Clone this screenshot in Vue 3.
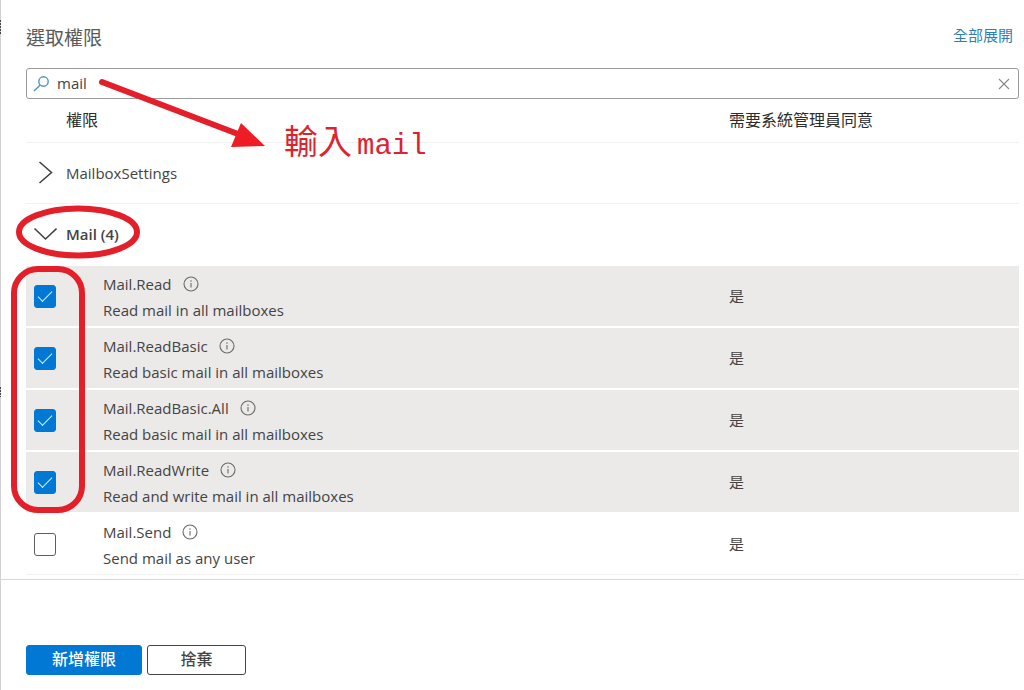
<script setup>
import { ref } from 'vue'

const query = ref('mail')
const permissions = ref([
  { name: 'Mail.Read', description: 'Read mail in all mailboxes', checked: true },
  { name: 'Mail.ReadBasic', description: 'Read basic mail in all mailboxes', checked: true },
  { name: 'Mail.ReadBasic.All', description: 'Read basic mail in all mailboxes', checked: true },
  { name: 'Mail.ReadWrite', description: 'Read and write mail in all mailboxes', checked: true },
  { name: 'Mail.Send', description: 'Send mail as any user', checked: false },
])
</script>

<template>
  <main class="panel">
    <header class="head">
      <h1>選取權限</h1>
      <a href="#">全部展開</a>
    </header>

    <div class="search">
      <svg class="lens" viewBox="0 0 18 18" aria-hidden="true">
        <circle cx="10.500" cy="6.500" r="4.700" />
        <path d="M7.200 9.900 1 16" />
      </svg>
      <input v-model="query" type="text" aria-label="搜尋權限" />
      <button class="clear" type="button" aria-label="清除" @click="query = ''">
        <svg viewBox="0 0 12 12" aria-hidden="true"><path d="M1 1l10 10M11 1 1 11" /></svg>
      </button>
    </div>

    <table>
      <colgroup>
        <col class="c-check" />
        <col class="c-indent" />
        <col />
        <col class="c-consent" />
      </colgroup>
      <thead>
        <tr>
          <td></td>
          <th colspan="2" scope="col">權限</th>
          <th scope="col">需要系統管理員同意</th>
        </tr>
      </thead>
      <tbody>
        <tr class="group">
          <td colspan="4">
            <button type="button" aria-expanded="false">
              <svg viewBox="0 0 24 24" aria-hidden="true"><path d="M6.500 1 18.500 11.500 6.500 22" /></svg>
              <span>MailboxSettings</span>
            </button>
          </td>
        </tr>
        <tr class="group open">
          <td colspan="4">
            <button type="button" aria-expanded="true">
              <svg viewBox="0 0 24 24" aria-hidden="true"><path d="M1.500 6.500 12.500 17 23.500 6.500" /></svg>
              <span>Mail (4)</span>
            </button>
          </td>
        </tr>
        <tr v-for="(p, i) in permissions" :key="p.name" class="item" :class="{ selected: p.checked }">
          <td class="check"><input :id="'perm-' + i" v-model="p.checked" type="checkbox" /></td>
          <td></td>
          <td class="detail">
            <div class="name">
              <label :for="'perm-' + i">{{ p.name }}</label>
              <svg viewBox="0 0 16 16" aria-hidden="true">
                <circle cx="8" cy="8" r="7" />
                <path d="M8 7v4.500M8 4.300v1.400" />
              </svg>
            </div>
            <div class="desc">{{ p.description }}</div>
          </td>
          <td>是</td>
        </tr>
      </tbody>
    </table>

    <footer>
      <button class="primary" type="button">新增權限</button>
      <button class="secondary" type="button">捨棄</button>
    </footer>

    <svg class="marks" width="460" height="530" viewBox="0 0 460 530" aria-hidden="true">
      <path class="edge" d="M.5 20v14M.5 387v10" />
      <path class="stroke" d="M102 82 238 134" />
      <path class="fill" d="M241 123 265 146 231 147z" />
      <ellipse class="stroke" cx="78" cy="232" rx="59" ry="23.500" />
      <rect class="stroke" x="14" y="269" width="68" height="241" rx="24" />
    </svg>
    <p class="note"><span>輸入</span>mail</p>
  </main>
</template>

<style>
body {
  margin: 0;
  background: #fff;
}
</style>

<style scoped>
.panel {
  position: relative;
  box-sizing: border-box;
  min-height: 100vh;
  border-left: 1px solid #d2d2d2;
  padding-top: 24px;
  color: #444;
  font-family: "Open Sans", "Noto Sans CJK TC", sans-serif;
  font-size: 15px;
  line-height: 20px;
}
button,
input {
  font: inherit;
  color: inherit;
}
.head {
  display: flex;
  justify-content: space-between;
  align-items: flex-start;
  height: 44px;
  padding: 0 11px 0 25px;
}
h1 {
  margin: 0;
  font-size: 19px;
  line-height: 28px;
  font-weight: 400;
  color: #5a5a5a;
}
a {
  color: #2f7fb5;
  text-decoration: none;
  line-height: 22px;
}
.search {
  display: flex;
  align-items: center;
  box-sizing: border-box;
  height: 31px;
  margin: 0 5px 0 25px;
  padding: 0 8px 0 6px;
  border: 1px solid #9a9a9a;
  border-radius: 3px;
}
.lens {
  width: 18px;
  height: 18px;
  fill: none;
  stroke: #4a94cc;
  stroke-width: 1.4;
}
.search input {
  flex: 1;
  min-width: 0;
  margin: 0 0 0 6px;
  padding: 0 0 2px;
  border: 0;
  outline: 0;
  background: none;
}
.clear {
  display: flex;
  padding: 0;
  border: 0;
  background: none;
}
.clear svg {
  width: 12px;
  height: 12px;
  fill: none;
  stroke: #888;
  stroke-width: 1.1;
}
table {
  width: calc(100% - 30px);
  margin: 0 5px 0 25px;
  table-layout: fixed;
  border-collapse: separate;
  border-spacing: 0;
}
.c-check {
  width: 40px;
}
.c-indent {
  width: 37px;
}
.c-consent {
  width: 290px;
}
td,
th {
  box-sizing: border-box;
  padding: 0;
  text-align: left;
  vertical-align: middle;
  border-bottom: 1px solid #f1f1f1;
}
thead th,
thead td {
  height: 44px;
  padding-bottom: 2px;
  font-size: 16px;
  font-weight: 400;
  color: #2c2c2c;
}
.group td {
  height: 61px;
}
.group button {
  display: flex;
  align-items: center;
  gap: 9px;
  width: 100%;
  padding: 0 0 0 7px;
  border: 0;
  background: none;
  text-align: left;
}
.group svg {
  width: 24px;
  height: 24px;
  fill: none;
  stroke: #444;
  stroke-width: 1.6;
}
.open button {
  font-weight: 600;
}
.group.open td {
  border-bottom-color: #fff;
}
.item td {
  height: 62px;
  border-top: 1px solid #fff;
}
.item.selected td {
  background: #ebeae9;
  background-clip: padding-box;
  border-bottom-color: #fff;
}
.item .detail {
  padding-top: 2px;
}
.check input {
  appearance: none;
  display: grid;
  place-items: center;
  box-sizing: border-box;
  width: 22px;
  height: 23px;
  margin: 0 0 0 8px;
  border: 1px solid #605e5c;
  border-radius: 3px;
  background: #fff;
}
.check input:checked {
  border-color: #0078d4;
  background: #0078d4;
}
.check input:checked::before {
  content: "";
  box-sizing: border-box;
  width: 14px;
  height: 7px;
  margin-bottom: 4px;
  border: solid #d9ecfa;
  border-width: 0 0 1px 1px;
  transform: rotate(-45deg);
}
.name {
  display: flex;
  align-items: center;
  gap: 11px;
  line-height: 26px;
}
.name svg {
  width: 16px;
  height: 16px;
  fill: none;
  stroke: #6a6a6a;
  stroke-width: 1.1;
}
.desc {
  line-height: 26px;
}
footer {
  display: flex;
  gap: 5px;
  margin-top: 4px;
  padding: 65px 25px 15px;
  border-top: 1px solid #d6d6d6;
}
footer button {
  box-sizing: border-box;
  height: 30px;
  padding: 0 0 2px;
  border: 1px solid #444;
  border-radius: 3px;
  background: #fff;
  font-size: 16px;
  line-height: 20px;
  font-weight: 500;
}
footer .primary {
  width: 116px;
  border-color: #0078d4;
  background: #0078d4;
  color: #fff;
}
footer .secondary {
  width: 99px;
}
.marks {
  position: absolute;
  top: 0;
  left: -1px;
  pointer-events: none;
}
.marks .edge {
  fill: none;
  stroke: #444;
  stroke-width: 1;
  stroke-dasharray: 2 1;
}
.marks .stroke {
  fill: none;
  stroke: #e3202a;
  stroke-width: 6;
  stroke-linecap: round;
}
.marks .fill {
  fill: #ee1c25;
}
.note {
  position: absolute;
  top: 120px;
  left: 283px;
  display: flex;
  align-items: baseline;
  gap: 5px;
  margin: 0;
  color: #dc2430;
  font-family: "Liberation Mono", "Noto Sans CJK TC", monospace;
  font-size: 29px;
  line-height: 40px;
  pointer-events: none;
}
.note span {
  font-family: "Noto Sans CJK TC", sans-serif;
  font-size: 34px;
  font-weight: 400;
}
</style>
